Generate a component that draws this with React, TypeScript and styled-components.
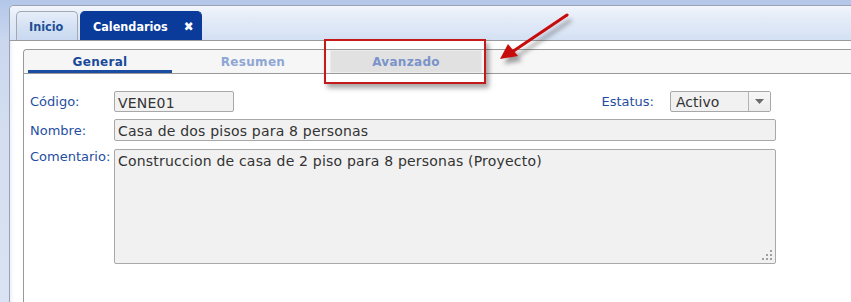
import React from "react";
import styled, { createGlobalStyle } from "styled-components";

const Global = createGlobalStyle`
  html, body { margin: 0; padding: 0; }
  body {
    width: 851px; height: 302px; overflow: hidden;
    font-family: "DejaVu Sans", Verdana, sans-serif;
    background: linear-gradient(180deg, #b4c7e9 0px, #c9d6ee 40px, #d3ddf0 120px, #dae3f3 302px);
  }
`;

const Page = styled.div`
  position: relative;
  width: 851px;
  height: 302px;
  padding: 5px 0 0 9px;
  box-sizing: border-box;
  display: flex;
`;

const Outer = styled.div`
  flex: 1;
  display: flex;
  flex-direction: column;
  border-left: 1px solid #9aa3b2;
  border-top: 1px solid #9aa3b2;
  border-top-left-radius: 5px;
  overflow: hidden;
  background: #fff;
`;

const TabStrip = styled.div`
  height: 35px;
  box-sizing: border-box;
  display: flex;
  align-items: flex-end;
  gap: 2px;
  padding-left: 6px;
  background: linear-gradient(180deg, #f1f5fc 0%, #e3ebf7 40%, #d4e1f4 100%);
  border-bottom: 1px solid #9a9a9a;
`;

const Tab = styled.div<{ $active?: boolean }>`
  height: 29px;
  box-sizing: border-box;
  display: flex;
  align-items: center;
  gap: 16px;
  padding: 0 ${(p) => (p.$active ? "9px" : "12px")} 0 12px;
  border: 1px solid ${(p) => (p.$active ? "#0a3a9a" : "#a3a8b3")};
  border-bottom: none;
  border-radius: 5px 5px 0 0;
  font-family: "DejaVu Sans Condensed", "DejaVu Sans", sans-serif;
  font-size: 12.5px;
  font-weight: bold;
  color: ${(p) => (p.$active ? "#ffffff" : "#1d4f97")};
  background: ${(p) =>
    p.$active ? "#0a3a9a" : "linear-gradient(180deg, #e6eefa 0%, #d3e0f3 55%, #c9d9f0 100%)"};
  width: ${(p) => (p.$active ? "122px" : "62px")};
`;

const Close = styled.span`
  font-size: 13px;
  line-height: 1;
  color: #fff;
`;

const Body = styled.div`
  flex: 1;
  display: flex;
  padding: 8px 0 0 13px;
  background: linear-gradient(90deg, #edf1f8 0px, #fbfcfe 3px, #ffffff 5px);
`;

const Inner = styled.div`
  flex: 1;
  display: flex;
  flex-direction: column;
  border-left: 1px solid #999;
  border-top: 1px solid #999;
  border-top-left-radius: 4px;
`;

const SubBar = styled.div`
  height: 24px;
  box-sizing: border-box;
  display: flex;
  gap: 1px;
  background: #f6f6f6;
  border-bottom: 1px solid #9a9a9a;
  border-top-left-radius: 4px;
`;

const SubTab = styled.div<{ $color: string; $active?: boolean; $hl?: boolean }>`
  position: relative;
  width: 152px;
  display: flex;
  align-items: center;
  justify-content: center;
  font-size: 12px;
  font-weight: bold;
  letter-spacing: 0.3px;
  color: ${(p) => p.$color};
  background: ${(p) => (p.$hl ? "#e1e1e1" : "transparent")};
  box-shadow: ${(p) => (p.$hl ? "inset 0 0 0 1px #ececec" : "none")};
  padding-top: 1px;
  &::after {
    content: "";
    display: ${(p) => (p.$active ? "block" : "none")};
    position: absolute;
    left: 4px;
    right: 4px;
    bottom: 0;
    height: 3px;
    background: #1b4ea3;
  }
`;

const Form = styled.div`
  display: grid;
  grid-template-columns: 84px 662px;
  row-gap: 7px;
  padding: 17px 0 0 6px;
  font-size: 13px;
`;

const Label = styled.div<{ $top?: boolean }>`
  color: #1f4e9f;
  display: flex;
  align-items: ${(p) => (p.$top ? "flex-start" : "center")};
  padding-top: ${(p) => (p.$top ? "1px" : "0")};
  white-space: nowrap;
`;

const Row = styled.div`
  display: flex;
  align-items: center;
`;

const Field = styled.div<{ $w?: string; $h?: string }>`
  position: relative;
  width: ${(p) => p.$w || "662px"};
  height: ${(p) => p.$h || "22px"};
  box-sizing: border-box;
  border: 1px solid #a8a8a8;
  border-radius: 2px;
  background: #f1f1f1;
  color: #333;
  font-size: 14px;
  letter-spacing: 0.2px;
  padding: 1px 3px 0;
  line-height: 20px;
`;

const StatusLabel = styled(Label)`
  margin-left: auto;
  margin-right: 16px;
`;

const Select = styled.div`
  width: 101px;
  height: 21px;
  box-sizing: border-box;
  border: 1px solid #a8a8a8;
  border-radius: 2px;
  background: #f1f1f1;
  display: flex;
  margin-right: 5px;
  font-size: 14px;
  color: #333;
`;

const SelectText = styled.div`
  flex: 1;
  padding: 0 5px;
  line-height: 20px;
`;

const SelectBtn = styled.div`
  width: 21px;
  border-left: 1px solid #b4b4b4;
  display: flex;
  align-items: center;
  justify-content: center;
  background: linear-gradient(180deg, #f7f7f7, #ececec);
`;

const Grip = styled.svg`
  position: absolute;
  right: 2px;
  bottom: 2px;
`;

const Annot = styled.div`
  position: absolute;
  left: 324px;
  top: 39px;
  width: 162px;
  height: 45px;
  box-sizing: border-box;
  border: 2px solid #c41a1a;
  box-shadow: 3px 4px 5px rgba(0, 0, 0, 0.35);
  pointer-events: none;
`;

const Arrow = styled.svg`
  position: absolute;
  left: 490px;
  top: 8px;
  overflow: visible;
  pointer-events: none;
`;

export default function App() {
  return (
    <>
      <Global />
      <Page>
        <Outer>
          <TabStrip>
            <Tab>Inicio</Tab>
            <Tab $active>
              Calendarios<Close>✖</Close>
            </Tab>
          </TabStrip>
          <Body>
            <Inner>
              <SubBar>
                <SubTab $color="#1a4a9a" $active>General</SubTab>
                <SubTab $color="#8ea6d4">Resumen</SubTab>
                <SubTab $color="#7a93ca" $hl>Avanzado</SubTab>
              </SubBar>
              <Form>
                <Label>Código:</Label>
                <Row>
                  <Field $w="120px" $h="21px">VENE01</Field>
                  <StatusLabel>Estatus:</StatusLabel>
                  <Select>
                    <SelectText>Activo</SelectText>
                    <SelectBtn>
                      <svg width="9" height="5" viewBox="0 0 9 5">
                        <path d="M0 0 H9 L4.5 5 Z" fill="#6b6b6b" />
                      </svg>
                    </SelectBtn>
                  </Select>
                </Row>
                <Label>Nombre:</Label>
                <Field>Casa de dos pisos para 8 personas</Field>
                <Label $top>Comentario:</Label>
                <Field $h="115px" style={{ marginTop: 1 }}>
                  Construccion de casa de 2 piso para 8 personas (Proyecto)
                  <Grip width="11" height="11" viewBox="0 0 11 11">
                    {[
                      [8, 0],
                      [8, 4],
                      [4, 4],
                      [8, 8],
                      [4, 8],
                      [0, 8],
                    ].map(([x, y], i) => (
                      <rect key={i} x={x} y={y} width="2" height="2" fill="#a0a0a0" />
                    ))}
                  </Grip>
                </Field>
              </Form>
            </Inner>
          </Body>
        </Outer>
        <Annot />
        <Arrow width="90" height="60" viewBox="0 0 90 60">
          <defs>
            <filter id="sh" x="-30%" y="-30%" width="160%" height="160%">
              <feGaussianBlur stdDeviation="2" />
            </filter>
          </defs>
          <g transform="translate(4,5)" filter="url(#sh)" opacity="0.45">
            <line x1="77" y1="7" x2="22" y2="44" stroke="#333" strokeWidth="3" />
            <path d="M10 51 L18 36 L28 48 Z" fill="#333" />
          </g>
          <line x1="77" y1="7" x2="22" y2="44" stroke="#c80b0b" strokeWidth="3" strokeLinecap="round" />
          <path d="M10 51 L18 36 L28 48 Z" fill="#c80b0b" />
        </Arrow>
      </Page>
    </>
  );
}
